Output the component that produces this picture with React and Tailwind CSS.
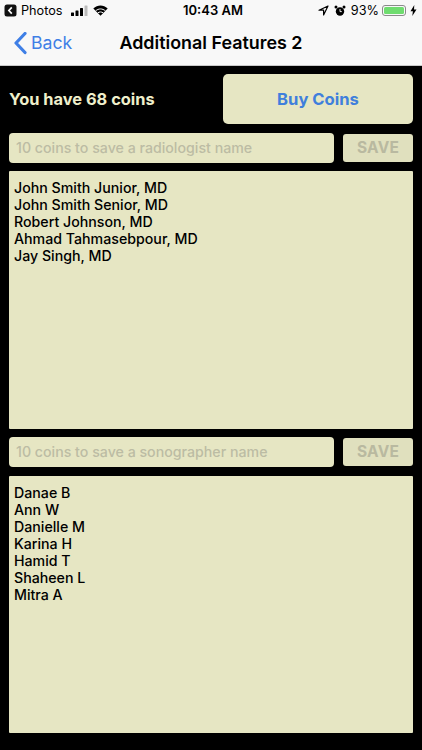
const F = "font-['Inter','Liberation_Sans',sans-serif]";

function Names({ names, h }) {
  return (
    <div className={`${h} bg-[#e6e6c3] rounded-[1px] pl-[5px] pt-[8px] text-[14.2px] leading-[17px] font-medium text-black`}>
      {names.map((n) => (
        <div key={n}>{n}</div>
      ))}
    </div>
  );
}

function SaveRow({ placeholder }) {
  return (
    <div className="flex items-center h-[30px] gap-[9px]">
      <div className="w-[325px] h-[30px] bg-[#e6e6c3] rounded-[4px] pl-[7px] flex items-center text-[14.2px] text-[#bcbca4] font-medium">
        {placeholder}
      </div>
      <div className="w-[70px] h-[28px] bg-[#e0e0be] rounded-[3px] flex items-center justify-center text-[15.5px] font-bold tracking-[0.2px] text-[#b9b9a0]">
        SAVE
      </div>
    </div>
  );
}

export default function App() {
  return (
    <div className={`w-[422px] h-[750px] bg-black overflow-hidden flex flex-col ${F}`}>
      <div className="h-[66px] bg-[#f8f8f8] flex flex-col shrink-0 border-b border-[#c9c9c9]">
        <div className="h-[22px] flex items-center justify-between pl-[4px] pr-[5px] text-[12.7px] text-black relative">
          <div className="flex items-center">
            <svg width="13" height="13" viewBox="0 0 13 13">
              <rect x="0.5" y="0.5" width="12" height="12" rx="2.5" fill="#111" />
              <path d="M7.8 3.4 4.9 6.5l2.9 3.1" fill="none" stroke="#fff" strokeWidth="1.7" />
            </svg>
            <span className="ml-[4px]">Photos</span>
            <svg className="ml-[8px]" width="17" height="11" viewBox="0 0 17 11">
              <rect x="0" y="7.5" width="3" height="3.5" rx="0.5" fill="#000" />
              <rect x="4.5" y="5.5" width="3" height="5.5" rx="0.5" fill="#000" />
              <rect x="9" y="3" width="3" height="8" rx="0.5" fill="#000" />
              <rect x="13.5" y="0.5" width="3" height="10.5" rx="0.5" fill="#bbb" />
            </svg>
            <svg className="ml-[5px]" width="15" height="11" viewBox="0 0 15 11">
              <path d="M7.5 10.8 0.3 3.6C4.5-.5 10.5-.5 14.7 3.6z" fill="#000" />
              <path d="M2.6 5.9C5.5 3.3 9.5 3.3 12.4 5.9" fill="none" stroke="#f8f8f8" strokeWidth="1" />
              <path d="M4.7 8C6.3 6.6 8.7 6.6 10.3 8" fill="none" stroke="#f8f8f8" strokeWidth="1" />
            </svg>
          </div>
          <div className="absolute left-[183px] font-semibold text-[13px]">10:43 AM</div>
          <div className="flex items-center">
            <svg width="11" height="11" viewBox="0 0 11 11">
              <path d="M10 1 1 5.2h4.6V10z" fill="none" stroke="#000" strokeWidth="1.2" strokeLinejoin="round" />
            </svg>
            <svg className="ml-[5px]" width="12" height="12" viewBox="0 0 12 12">
              <circle cx="6" cy="6.5" r="4.2" fill="#000" />
              <circle cx="2" cy="2" r="1.5" fill="#000" />
              <circle cx="10" cy="2" r="1.5" fill="#000" />
              <path d="M6 4v2.6h1.8" fill="none" stroke="#fff" strokeWidth="0.9" />
            </svg>
            <span className="ml-[5px]">93%</span>
            <div className="ml-[3px] w-[24px] h-[11px] border border-[#8a8a8a] rounded-[3px] p-[1px]">
              <div className="w-full h-full bg-[#6fdc6f] rounded-[1.5px]" />
            </div>
            <svg className="ml-[4px]" width="7" height="11" viewBox="0 0 7 11">
              <path d="M4.3 0 .5 6.2h2.4L2.3 11l4.2-6.5H4z" fill="#000" />
            </svg>
          </div>
        </div>
        <div className="flex-1 flex items-center relative">
          <svg className="ml-[14px]" width="14" height="23" viewBox="0 0 14 23">
            <path d="M11 1.5 2 11l9 9.5" fill="none" stroke="#3f7fe6" strokeWidth="3.2" strokeLinecap="round" strokeLinejoin="round" />
          </svg>
          <span className="ml-[3px] text-[17.7px] text-[#3f7fe6]">Back</span>
          <span className="absolute left-0 right-0 text-center text-[17.9px] font-semibold text-black">
            Additional Features 2
          </span>
        </div>
      </div>
      <div className="flex-1 flex flex-col pl-[9px] pr-[9px] pt-[8px]">
        <div className="flex items-center justify-between h-[50px]">
          <span className="text-[16.4px] font-bold text-[#efefcb]">You have 68 coins</span>
          <div className="w-[190px] h-[50px] bg-[#e6e6c3] rounded-[5px] flex items-center justify-center text-[16.6px] font-bold text-[#3f7fdc]">
            Buy Coins
          </div>
        </div>
        <div className="mt-[9px]">
          <SaveRow placeholder="10 coins to save a radiologist name" />
        </div>
        <div className="mt-[8px]">
          <Names h="h-[258px]" names={["John Smith Junior, MD", "John Smith Senior, MD", "Robert Johnson, MD", "Ahmad Tahmasebpour, MD", "Jay Singh, MD"]} />
        </div>
        <div className="mt-[8px]">
          <SaveRow placeholder="10 coins to save a sonographer name" />
        </div>
        <div className="mt-[9px]">
          <Names h="h-[257px]" names={["Danae B", "Ann W", "Danielle M", "Karina H", "Hamid T", "Shaheen L", "Mitra A"]} />
        </div>
      </div>
    </div>
  );
}
